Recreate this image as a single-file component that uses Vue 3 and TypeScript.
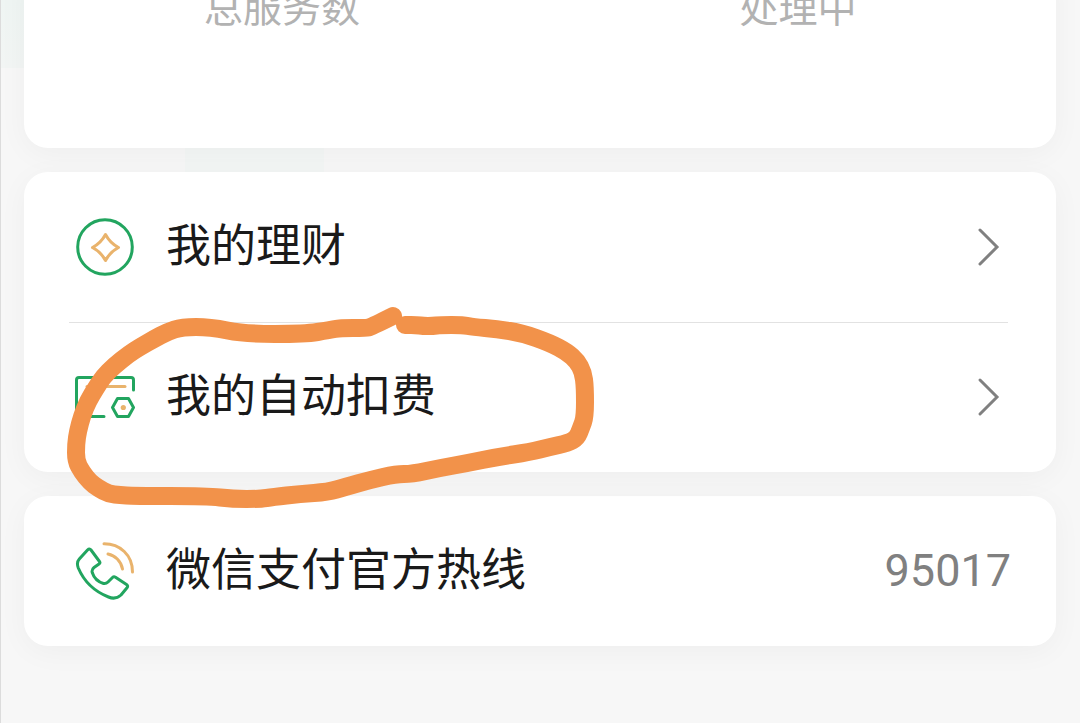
<script setup lang="ts">
interface Entry {
  id: 'wealth' | 'deduct'
  label: string
}

type Point = [number, number]

const stats: string[] = ['总服务数', '处理中']

const entries: Entry[] = [
  { id: 'wealth', label: '我的理财' },
  { id: 'deduct', label: '我的自动扣费' },
]

const hotline = { label: '微信支付官方热线', phone: '95017' }

const markerPoints: Point[] = [
  [393, 316], [371, 327], [366, 328], [340, 328], [330, 330], [305, 334], [245, 334],
  [210, 327], [182, 327], [167, 332], [154, 339], [140, 347], [129, 354], [114, 366],
  [103, 377], [96, 388], [88, 401], [82, 416], [78, 431], [76, 444], [76, 461],
  [82, 472], [90, 482], [98, 488], [109, 494], [120, 495], [133, 496], [207, 496],
  [233, 499], [260, 499], [273, 497], [300, 494], [328, 492], [345, 487], [370, 480],
  [396, 474], [412, 474], [440, 468], [468, 463], [497, 457], [530, 452], [550, 447],
  [568, 443], [577, 438], [581, 428], [585, 417], [585, 387], [583, 372], [577, 361],
  [567, 352], [550, 343], [522, 333], [497, 329], [473, 327], [463, 325], [440, 325],
  [433, 326], [423, 326], [417, 325], [405, 325],
]

// Joins the points with quadratic curves that meet at the segment midpoints.
function smoothPath(points: Point[]): string {
  const last = points.length - 1
  let d = `M${points[0][0]} ${points[0][1]}`
  for (let i = 1; i < last; i++) {
    const [x, y] = points[i]
    const [nx, ny] = points[i + 1]
    d += `Q${x} ${y} ${(x + nx) / 2} ${(y + ny) / 2}`
  }
  return `${d}L${points[last][0]} ${points[last][1]}`
}

const markerPath = smoothPath(markerPoints)
</script>

<template>
  <main class="page">
    <section class="card stats">
      <span v-for="stat in stats" :key="stat" class="stat">{{ stat }}</span>
    </section>

    <section class="card menu">
      <button v-for="entry in entries" :key="entry.id" type="button" class="row">
        <svg v-if="entry.id === 'wealth'" class="icon" viewBox="0 0 60 60" aria-hidden="true">
          <circle class="green" cx="30" cy="30" r="27.3" />
          <path class="gold" d="M30.5 17.5Q35 26 43.5 30.500Q35 35 30.5 43.5Q26 35 17.5 30.5Q26 26 30.5 17.5Z" />
        </svg>
        <svg v-else class="icon" viewBox="0 0 60 60" aria-hidden="true">
          <path class="green" d="M29 49.5H4Q1.5 49.5 1.5 47V13Q1.5 10.5 4 10.5H56Q58.5 10.5 58.5 13V23" />
          <path class="gold" d="M12 19.5H50" />
          <path class="green" d="M42.5 31.5H53.5L58.5 40.5L53.5 49.5H42.5L37.5 40.5Z" />
          <circle class="dot" cx="48.3" cy="40.5" r="2.6" />
        </svg>
        <span class="label">{{ entry.label }}</span>
        <svg class="chevron" viewBox="0 0 24 40" aria-hidden="true">
          <path d="M4 3L21 20L4 37" />
        </svg>
      </button>

      <svg class="marker" viewBox="60 300 550 220" aria-hidden="true">
        <path :d="markerPath" />
      </svg>
    </section>

    <section class="card">
      <a class="row" href="tel:95017">
        <svg class="icon" viewBox="0 0 60 60" aria-hidden="true">
          <path
            class="green"
            d="M12.500 9Q14.500 7 16 9L24.500 20.500Q25.500 22 24 23L19 26.500Q16.500 28.500 17.200 31.500Q20 40 28.500 42.500Q31 43 33 41L37.500 36.500Q38.800 35.200 40.500 36.200L51.500 43.500Q53.500 45 52 46.800L46 54Q40.500 59 33.500 56Q12 47.500 3.300 27Q1.200 21.500 4.300 18Z"
          />
          <path class="gold" d="M29 2.8C45 2.8 57.5 14 57.5 31M33 13C40 14.5 46 20 47.5 28" />
        </svg>
        <span class="label">{{ hotline.label }}</span>
        <span class="phone">{{ hotline.phone }}</span>
      </a>
    </section>
  </main>
</template>

<style>
body {
  margin: 0;
  background: #f6f6f6;
}
</style>

<style scoped>
.page {
  box-sizing: border-box;
  min-height: 100vh;
  overflow: hidden;
  display: flex;
  flex-direction: column;
  gap: 24px;
  padding: 0 24px 76px 23px;
  border-left: 1px solid #dcdcdc;
  background:
    linear-gradient(#eff5f3, #f2f5f4) 0 0 / 24px 68px no-repeat,
    linear-gradient(#f3f6f5, #f3f6f5) 184px 148px / 139px 24px no-repeat,
    #f7f7f7;
  font-family: Roboto, "Noto Sans CJK SC", sans-serif;
}

.card {
  position: relative;
  border-radius: 24px;
  background: #fff;
  box-shadow: 0 6px 30px rgba(0, 0, 0, 0.04);
}

.stats {
  display: grid;
  grid-template-columns: 1fr 1fr;
  margin-top: -40px;
  padding: 21px 0 111px;
}

.stat {
  color: #b2b2b2;
  font-size: 39px;
  line-height: 56px;
  text-align: center;
}

.row {
  box-sizing: border-box;
  width: 100%;
  min-height: 150px;
  display: flex;
  align-items: center;
  gap: 31px;
  padding: 0 45px 0 51px;
  border: 0;
  background: none;
  color: #1a1a1a;
  font: inherit;
  font-size: 45px;
  line-height: 60px;
  text-align: left;
  text-decoration: none;
  cursor: pointer;
}

.row + .row::before {
  content: "";
  position: absolute;
  top: 150px;
  left: 45px;
  right: 48px;
  height: 1px;
  background: #e2e2e2;
}

.icon {
  flex: none;
  width: 60px;
  height: 60px;
  fill: none;
  stroke-width: 3;
  stroke-linecap: round;
  stroke-linejoin: round;
}

.green {
  stroke: #22a55f;
}

.gold {
  stroke: #e9b36c;
}

.dot {
  fill: #e9b36c;
}

.label {
  flex: 1;
}

.chevron {
  flex: none;
  width: 24px;
  height: 40px;
  margin-right: 11px;
  fill: none;
  stroke: #808080;
  stroke-width: 3;
  stroke-linecap: round;
}

.phone {
  color: #808080;
}

.marker {
  position: absolute;
  top: 128px;
  left: 36px;
  width: 550px;
  height: 220px;
  pointer-events: none;
  fill: none;
  stroke: #f2924a;
  stroke-width: 18;
  stroke-linecap: round;
  stroke-linejoin: round;
}

.menu {
  z-index: 1;
}
</style>
